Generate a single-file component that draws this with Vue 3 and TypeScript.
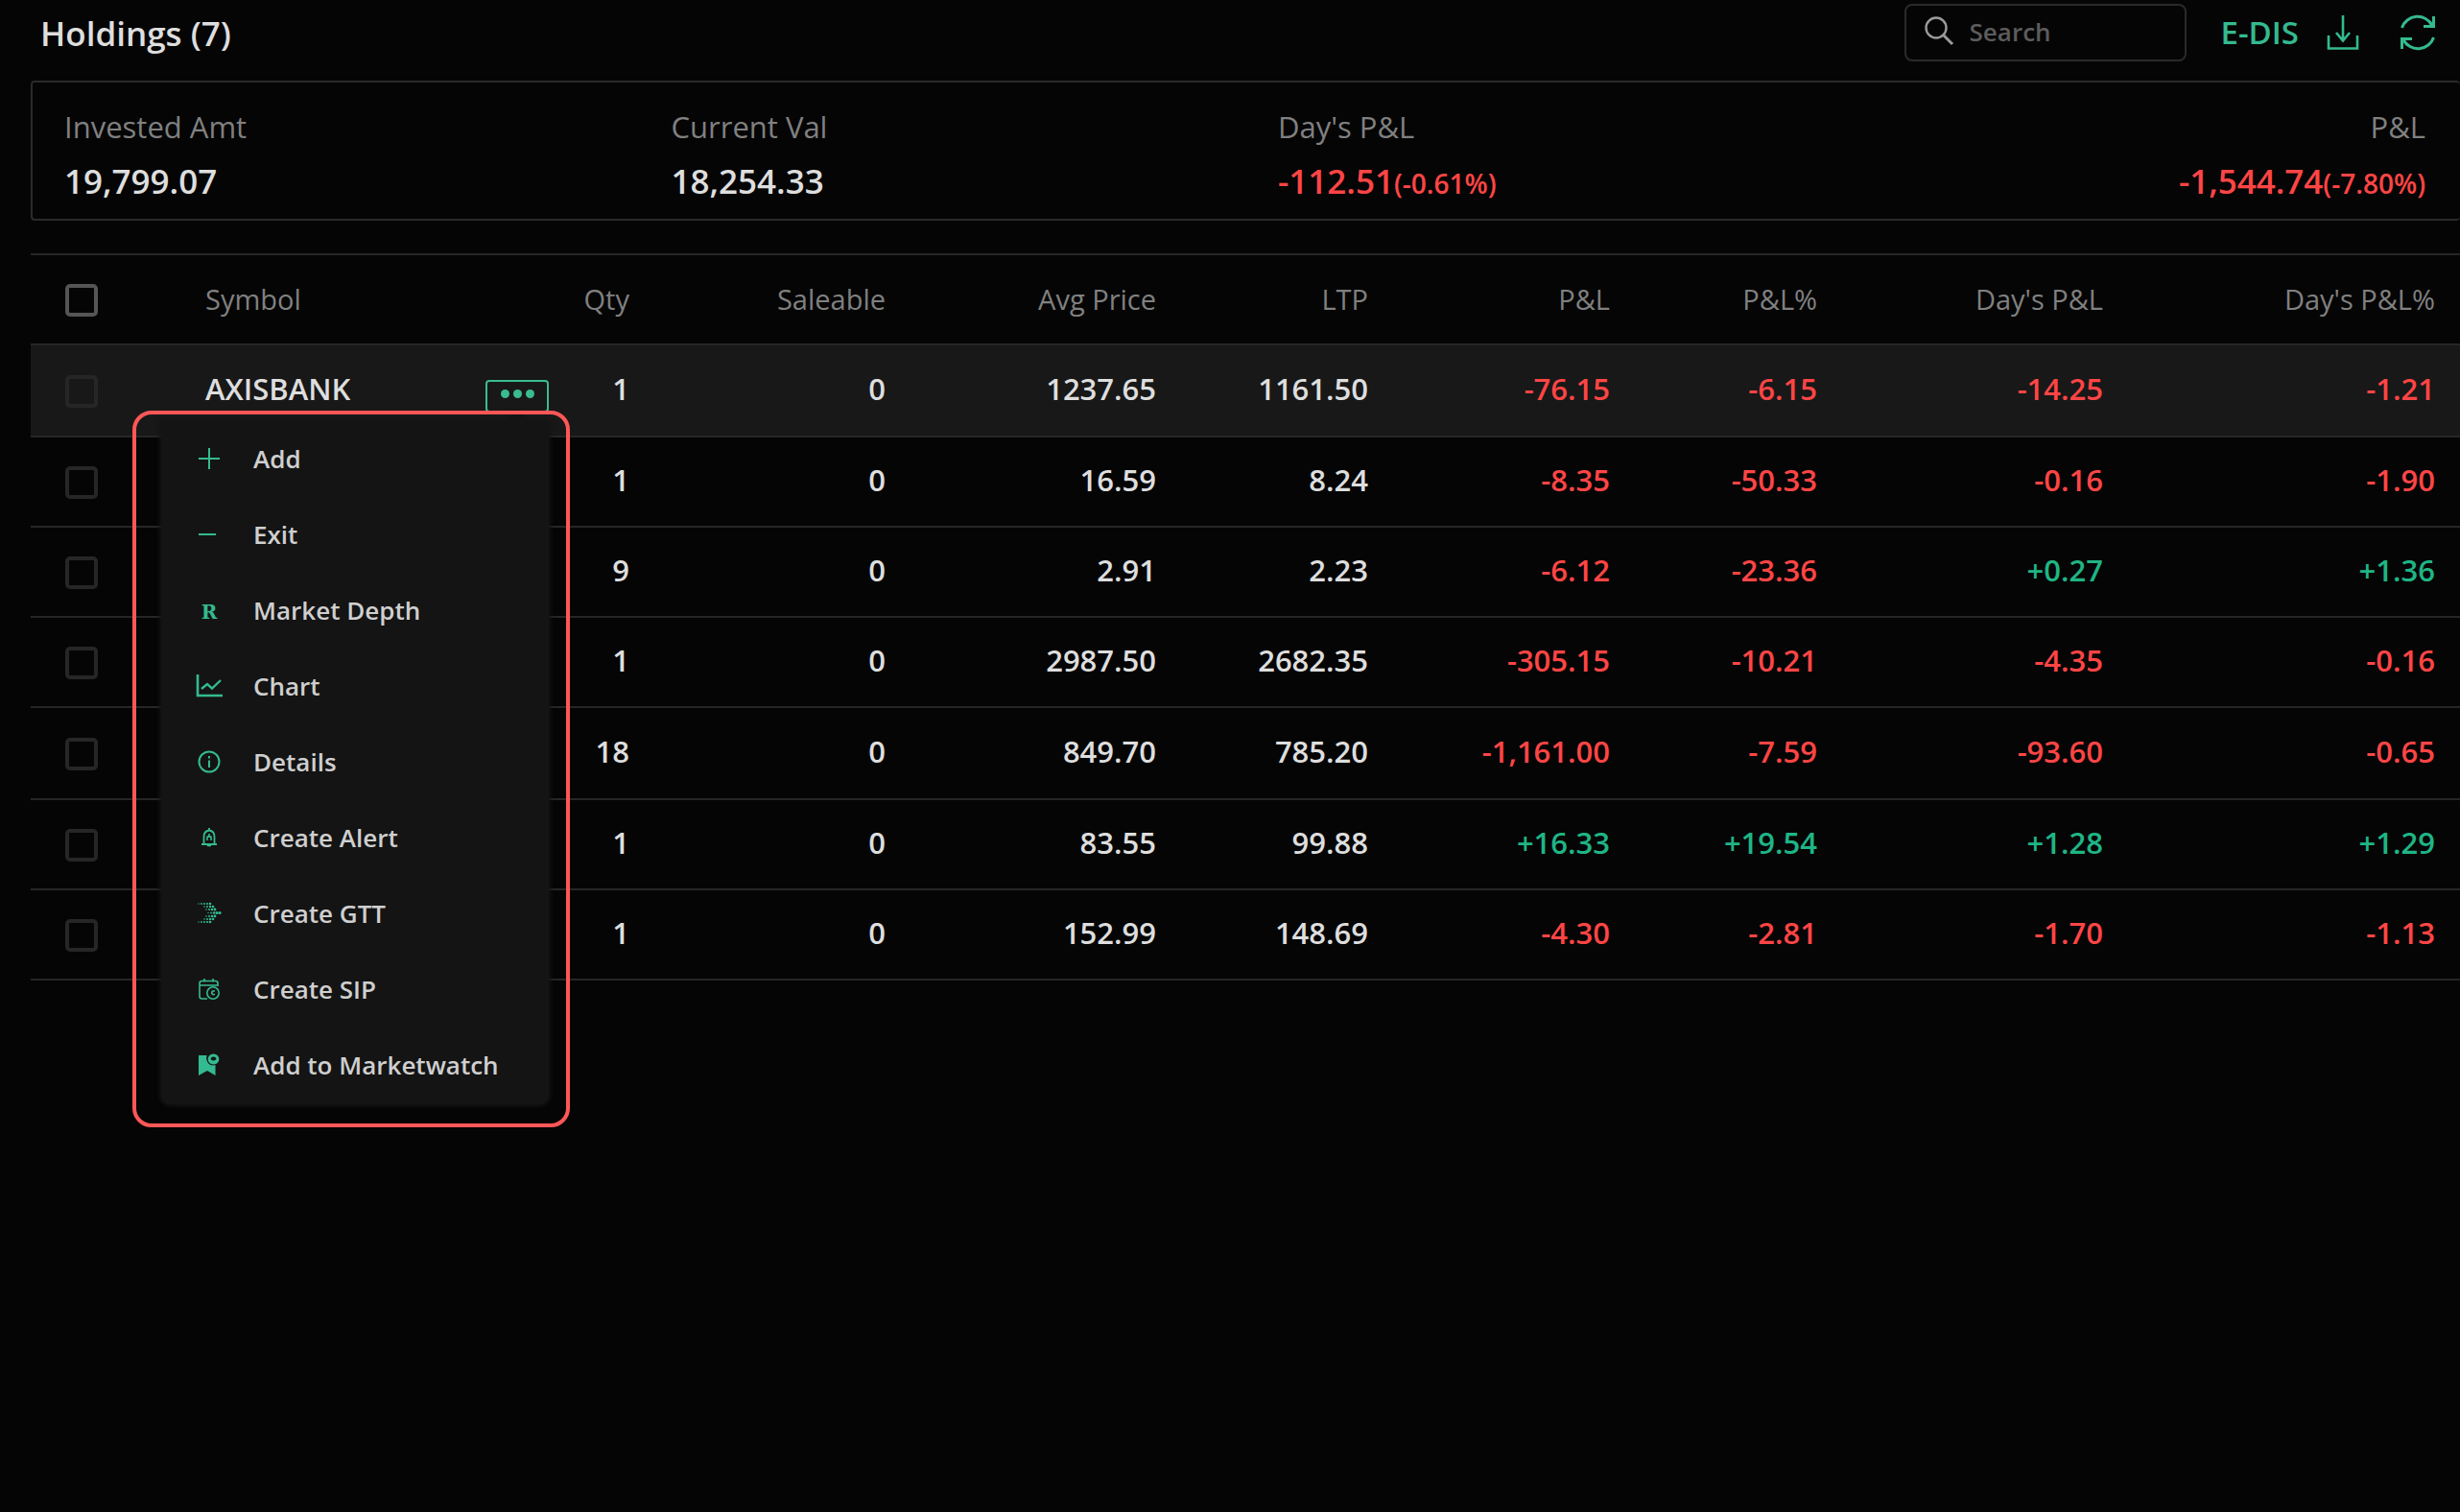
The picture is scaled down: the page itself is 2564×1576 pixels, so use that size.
<script setup lang="ts">
import { ref } from 'vue'

interface Holding {
  symbol: string
  qty: string
  saleable: string
  avg: string
  ltp: string
  changes: string[]
}

const columns = ['Qty', 'Saleable', 'Avg Price', 'LTP', 'P&L', 'P&L%', "Day's P&L", "Day's P&L%"]

const holdings: Holding[] = [
  { symbol: 'AXISBANK', qty: '1', saleable: '0', avg: '1237.65', ltp: '1161.50', changes: ['-76.15', '-6.15', '-14.25', '-1.21'] },
  { symbol: '', qty: '1', saleable: '0', avg: '16.59', ltp: '8.24', changes: ['-8.35', '-50.33', '-0.16', '-1.90'] },
  { symbol: '', qty: '9', saleable: '0', avg: '2.91', ltp: '2.23', changes: ['-6.12', '-23.36', '+0.27', '+1.36'] },
  { symbol: '', qty: '1', saleable: '0', avg: '2987.50', ltp: '2682.35', changes: ['-305.15', '-10.21', '-4.35', '-0.16'] },
  { symbol: '', qty: '18', saleable: '0', avg: '849.70', ltp: '785.20', changes: ['-1,161.00', '-7.59', '-93.60', '-0.65'] },
  { symbol: '', qty: '1', saleable: '0', avg: '83.55', ltp: '99.88', changes: ['+16.33', '+19.54', '+1.28', '+1.29'] },
  { symbol: '', qty: '1', saleable: '0', avg: '152.99', ltp: '148.69', changes: ['-4.30', '-2.81', '-1.70', '-1.13'] },
]

const menu = [
  { id: 'add', label: 'Add' },
  { id: 'exit', label: 'Exit' },
  { id: 'depth', label: 'Market Depth' },
  { id: 'chart', label: 'Chart' },
  { id: 'details', label: 'Details' },
  { id: 'alert', label: 'Create Alert' },
  { id: 'gtt', label: 'Create GTT' },
  { id: 'sip', label: 'Create SIP' },
  { id: 'watch', label: 'Add to Marketwatch' },
]

// Dots of the arrow-shaped GTT icon
const gttDots: [number, number, number][] = [
  [2, 3, 0.7], [5, 3, 0.9], [8, 3, 1], [11, 3, 1.1], [14, 3, 1.3],
  [8, 6, 0.8], [11, 6, 1], [14, 6, 1.2], [17, 6, 1.3],
  [10, 9, 0.8], [13, 9, 1], [16, 9, 1.3], [19, 9, 1.4],
  [12, 12.5, 0.7], [15, 12.5, 0.9], [18, 12.5, 1.3], [21, 12.5, 1.5], [24, 12.5, 1.6],
  [10, 16, 0.8], [13, 16, 1], [16, 16, 1.3], [19, 16, 1.4],
  [8, 19, 0.8], [11, 19, 1], [14, 19, 1.2], [17, 19, 1.3],
  [2, 22, 0.7], [5, 22, 0.9], [8, 22, 1], [11, 22, 1.1], [14, 22, 1.3],
]

const query = ref('')
const menuOpen = ref(true)
const tone = (v: string) => (v.startsWith('+') ? 'up' : 'down')
</script>

<template>
  <main class="page">
    <header class="topbar">
      <h1>Holdings (7)</h1>
      <div class="tools">
        <label class="search">
          <svg width="32" height="32" viewBox="0 0 32 32" fill="none" stroke="#9a9a9a" stroke-width="2.4" aria-hidden="true">
            <circle cx="13" cy="12" r="10.5" />
            <path d="M20.5 19.5 L30 29" stroke-width="3" />
          </svg>
          <input v-model="query" type="text" placeholder="Search" aria-label="Search" />
        </label>
        <a href="#" class="edis">E-DIS</a>
        <button type="button" class="tool" aria-label="Download">
          <svg width="36" height="40" viewBox="0 0 36 40" fill="none" stroke="currentColor" stroke-width="2.6">
            <path d="M18 2 V28 M11 20 L18 28.5 L25 20" />
            <path d="M3 23 V36.5 H33 V23" />
          </svg>
        </button>
        <button type="button" class="tool refresh" aria-label="Refresh">
          <svg width="40" height="40" viewBox="0 0 40 40" fill="none" stroke="currentColor" stroke-width="3">
            <path d="M3.5 15 A17 16.5 0 0 1 35 12.5 M36.5 3 V13.5 H26" />
            <path d="M36.5 25 A17 16.5 0 0 1 5 27.5 M3.5 37 V26.5 H14" />
          </svg>
        </button>
      </div>
    </header>

    <section class="summary">
      <div class="stat">
        <span class="label">Invested Amt</span>
        <span class="value">19,799.07</span>
      </div>
      <div class="stat">
        <span class="label">Current Val</span>
        <span class="value">18,254.33</span>
      </div>
      <div class="stat">
        <span class="label">Day's P&amp;L</span>
        <span class="value down">-112.51<small>(-0.61%)</small></span>
      </div>
      <div class="stat end">
        <span class="label">P&amp;L</span>
        <span class="value down">-1,544.74<small>(-7.80%)</small></span>
      </div>
    </section>

    <table>
      <colgroup>
        <col class="c-check" /><col class="c-symbol" /><col class="c-qty" /><col class="c-sale" /><col class="c-avg" />
        <col class="c-ltp" /><col class="c-pl" /><col class="c-plp" /><col class="c-day" /><col class="c-dayp" />
      </colgroup>
      <thead>
        <tr>
          <th class="check"><input type="checkbox" aria-label="Select all" /></th>
          <th class="sym">Symbol</th>
          <th v-for="c in columns" :key="c">{{ c }}</th>
        </tr>
      </thead>
      <tbody>
        <tr v-for="(h, i) in holdings" :key="i" :class="{ active: i === 0 }">
          <td class="check"><input type="checkbox" aria-label="Select holding" /></td>
          <td class="sym">
            <div v-if="h.symbol" class="symbol">
              <span class="name">{{ h.symbol }}</span>
              <div class="actions">
                <button type="button" class="more" aria-label="More actions" @click="menuOpen = !menuOpen">
                  <i /><i /><i />
                </button>
                <div v-if="menuOpen" class="popover">
                  <ul class="menu">
                    <li v-for="m in menu" :key="m.id">
                      <button type="button">
                        <span class="icon">
                          <svg v-if="m.id === 'add'" width="24" height="24" viewBox="0 0 24 24"><path d="M12 1 V23 M1 12 H23" /></svg>
                          <svg v-else-if="m.id === 'exit'" width="24" height="24" viewBox="0 0 24 24"><path d="M1 12 H19" /></svg>
                          <b v-else-if="m.id === 'depth'">R</b>
                          <svg v-else-if="m.id === 'chart'" width="28" height="24" viewBox="0 0 28 24">
                            <path d="M2 0 V22 H28" stroke-width="2.6" />
                            <path d="M6 15 L12 10 L17 14.5 L26 6" stroke-width="2.4" />
                          </svg>
                          <svg v-else-if="m.id === 'details'" width="24" height="24" viewBox="0 0 24 24">
                            <circle cx="12" cy="12" r="10.5" />
                            <path d="M12 10.5 V18 M12 6 V8.5" />
                          </svg>
                          <svg v-else-if="m.id === 'alert'" width="24" height="24" viewBox="0 0 24 24">
                            <path d="M4 19 H20 M6.5 19 V11 C6.5 7 9 5 12 4.5 C15 5 17.5 7 17.5 11 V19 M12 2 V5" stroke-width="1.8" />
                            <path d="M10 20.5 H14 M12 8 V12 M9.5 11 H14.5 M10 15 V11 M14 15 V11" stroke-width="1.6" />
                          </svg>
                          <svg v-else-if="m.id === 'gtt'" width="26" height="26" viewBox="0 0 26 26" class="solid">
                            <circle v-for="(d, k) in gttDots" :key="k" :cx="d[0]" :cy="d[1]" :r="d[2]" />
                          </svg>
                          <svg v-else-if="m.id === 'sip'" width="24" height="24" viewBox="0 0 24 24" class="thin">
                            <path d="M10 22 H4.5 Q2 22 2 19.5 V6 Q2 3.5 4.5 3.5 H18.5 Q21 3.5 21 6 V9 M2 8 H21 M7 1 V4.5 M16 1 V4.5" />
                            <circle cx="16" cy="16" r="6.2" />
                            <path d="M18 14 H15.5 Q14 15.5 15.5 17.5 H18" />
                          </svg>
                          <svg v-else width="24" height="24" viewBox="0 0 24 24" class="solid">
                            <path d="M1 2 H9.5 Q8 8 12.5 11.5 Q15.5 13 18.5 12 V23 L10 18 L1 23 Z" />
                            <path fill-rule="evenodd" d="M16.5 0.5 a5.8 5.5 0 1 0 0.01 0 Z M16.5 3.6 a2.8 2 0 1 1 -0.01 0 Z" />
                          </svg>
                        </span>
                        {{ m.label }}
                      </button>
                    </li>
                  </ul>
                </div>
              </div>
            </div>
          </td>
          <td>{{ h.qty }}</td>
          <td>{{ h.saleable }}</td>
          <td>{{ h.avg }}</td>
          <td>{{ h.ltp }}</td>
          <td v-for="(v, k) in h.changes" :key="k" :class="tone(v)">{{ v }}</td>
        </tr>
      </tbody>
    </table>
  </main>
</template>

<style>
body {
  background: #050505;
}
</style>

<style scoped>
.page {
  min-height: 100vh;
  padding-left: 32px;
  box-sizing: border-box;
  background: #050505;
  color: #dedede;
  font-family: "Open Sans", "Noto Sans", sans-serif;
  overflow: hidden;
}

.topbar {
  display: flex;
  align-items: center;
  justify-content: space-between;
  height: 68px;
  padding: 0 24px 0 10px;
  margin-bottom: 16px;
}

h1 {
  margin: 0;
  font-size: 35px;
  font-weight: 600;
}

.tools {
  display: flex;
  align-items: center;
}

.search {
  display: flex;
  align-items: center;
  gap: 16px;
  box-sizing: border-box;
  width: 294px;
  height: 60px;
  padding: 0 18px 2px;
  border: 2px solid #2a2a2a;
  border-radius: 8px;
}

.search svg {
  flex: none;
}

.search input {
  width: 100%;
  min-width: 0;
  padding: 0;
  border: 0;
  outline: 0;
  background: none;
  color: #dedede;
  font: 600 26px "Open Sans", sans-serif;
}

.search input::placeholder {
  color: #5c5c5c;
  opacity: 1;
}

.edis {
  margin: 0 28px 0 36px;
  padding-bottom: 2px;
  color: #34ba90;
  font-size: 33px;
  font-weight: 600;
  text-decoration: none;
}

.tool {
  display: flex;
  padding: 0;
  border: 0;
  background: none;
  color: #34ba90;
}

.refresh {
  margin-left: 40px;
}

.summary {
  display: grid;
  grid-template-columns: repeat(4, 1fr);
  box-sizing: border-box;
  height: 146px;
  padding-top: 22px;
  border: 2px solid #2a2a2a;
  border-right: 0;
  border-radius: 4px;
}

.stat {
  display: flex;
  flex-direction: column;
  padding: 0 36px 0 33px;
}

.end {
  align-items: flex-end;
}

.label {
  color: #808080;
  font-size: 31px;
  line-height: 48px;
}

.value {
  font-size: 35px;
  font-weight: 600;
  line-height: 66px;
}

.value small {
  font-size: 28px;
}

.value.down,
td.down {
  color: #ff4545;
}

td.up {
  color: #1fb585;
}

table {
  width: 100%;
  margin-top: 34px;
  border-collapse: separate;
  border-spacing: 0;
  border-top: 2px solid #262626;
  table-layout: fixed;
}

.c-check { width: 156px; }
.c-symbol { width: 384px; }
.c-qty { width: 110px; }
.c-sale { width: 267px; }
.c-avg { width: 282px; }
.c-ltp { width: 221px; }
.c-pl { width: 252px; }
.c-plp { width: 216px; }
.c-day { width: 298px; }
.c-dayp { width: 346px; }

th,
td {
  box-sizing: border-box;
  height: 94px;
  padding: 0 26px 4px 0;
  border-bottom: 2px solid #262626;
  font-size: 31px;
  line-height: 42px;
  text-align: right;
  white-space: nowrap;
}

tbody tr:nth-child(4n + 1) td {
  height: 96px;
}

th {
  padding-bottom: 0;
  color: #808080;
  font-size: 29px;
  font-weight: 400;
}

td {
  font-weight: 600;
}

.active td {
  background: #181818;
}

.check {
  padding: 2px 0 0 36px;
  text-align: left;
}

.sym {
  padding-left: 26px;
  padding-right: 0;
  text-align: left;
}

.check input {
  display: block;
  appearance: none;
  width: 34px;
  height: 34px;
  margin: 0;
  border: 4px solid #262626;
  border-radius: 5px;
}

th.check input {
  border-color: #555;
}

.symbol {
  display: flex;
  align-items: flex-end;
  justify-content: space-between;
  height: 50px;
}

.name {
  line-height: 50px;
}

.actions {
  position: relative;
}

.more {
  display: flex;
  align-items: flex-start;
  justify-content: center;
  gap: 4px;
  box-sizing: border-box;
  width: 66px;
  height: 34px;
  padding: 8px 0 0;
  border: 2px solid #3bbb92;
  border-radius: 4px;
  background: none;
}

.more i {
  width: 9px;
  height: 9px;
  border-radius: 50%;
  background: #3bbb92;
}

.popover {
  position: absolute;
  z-index: 2;
  top: 32px;
  right: -22px;
  padding: 12px 22px 24px 30px;
}

.popover::before {
  content: "";
  position: absolute;
  top: -2px;
  right: 41px;
  border: 14px solid transparent;
  border-top: 0;
  border-bottom-color: #141414;
}

.popover::after {
  content: "";
  position: absolute;
  inset: 0;
  border: 4px solid #ff5757;
  border-radius: 20px;
  pointer-events: none;
}

.menu {
  width: 404px;
  margin: 0;
  padding: 0;
  list-style: none;
  border-radius: 4px 4px 10px 10px;
  background: #141414;
  box-shadow: 0 0 4px 2px #141414;
}

.menu button {
  display: flex;
  align-items: center;
  width: 100%;
  height: 79px;
  padding: 0 0 4px 34px;
  border: 0;
  background: none;
  color: #cfcfcf;
  font: 600 26px "Open Sans", sans-serif;
}

.icon {
  display: flex;
  align-items: center;
  justify-content: center;
  width: 32px;
  margin-right: 30px;
  color: #34ba90;
}

.icon svg {
  fill: none;
  stroke: currentColor;
  stroke-width: 2;
}

.icon svg.solid {
  fill: currentColor;
  stroke: none;
}

.icon svg.thin {
  stroke-width: 1.6;
}

.icon b {
  padding-top: 4px;
  font: 700 20px "DejaVu Serif", serif;
}
</style>
